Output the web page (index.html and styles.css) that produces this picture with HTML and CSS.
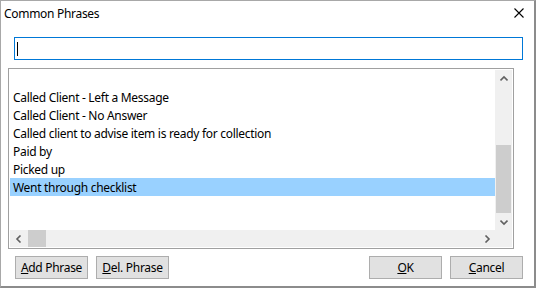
FILE: index.html
```html
<!DOCTYPE html>
<html lang="en">
<head>
    <meta charset="UTF-8">
    <title>Common Phrases</title>
    <link rel="stylesheet" href="styles.css">
</head>
<body>
    <div class="dialog">
        <div class="title-bar">
            <span class="title">Common Phrases</span>
            <svg class="close" width="10" height="10" viewBox="0 0 10 10">
                <path d="M0.5 0.5 L9.5 9.5 M9.5 0.5 L0.5 9.5" stroke="#000" stroke-width="1.1" fill="none"/>
            </svg>
        </div>

        <div class="search-box"><span class="caret"></span></div>

        <div class="phrase-list">
            <div class="list-inner">
                <div class="list-body">
                    <div class="items">
                        <div class="item"></div>
                        <div class="item">Called Client - Left a Message</div>
                        <div class="item">Called Client - No Answer</div>
                        <div class="item">Called client to advise item is ready for collection</div>
                        <div class="item">Paid by</div>
                        <div class="item">Picked up</div>
                        <div class="item selected">Went through checklist</div>
                    </div>
                    <div class="hscroll">
                        <div class="arrow-btn">
                            <svg width="8" height="8" viewBox="0 0 8 8"><polyline points="5.5,0.5 2,4 5.5,7.5" stroke="#606060" stroke-width="1.6" fill="none"/></svg>
                        </div>
                        <div class="h-thumb"></div>
                        <div class="h-track"></div>
                        <div class="arrow-btn">
                            <svg width="8" height="8" viewBox="0 0 8 8"><polyline points="2.5,0.5 6,4 2.5,7.5" stroke="#606060" stroke-width="1.6" fill="none"/></svg>
                        </div>
                    </div>
                </div>
                <div class="vscroll">
                    <div class="arrow-btn">
                        <svg width="8" height="8" viewBox="0 0 8 8"><polyline points="0.5,5.5 4,2 7.5,5.5" stroke="#606060" stroke-width="1.6" fill="none"/></svg>
                    </div>
                    <div class="v-track"></div>
                    <div class="v-thumb"></div>
                    <div class="arrow-btn">
                        <svg width="8" height="8" viewBox="0 0 8 8"><polyline points="0.5,2.5 4,6 7.5,2.5" stroke="#606060" stroke-width="1.6" fill="none"/></svg>
                    </div>
                    <div class="corner"></div>
                </div>
            </div>
        </div>

        <div class="buttons">
            <div class="left-buttons">
                <button><u>A</u>dd Phrase</button>
                <button><u>D</u>el. Phrase</button>
            </div>
            <div class="right-buttons">
                <button><u>O</u>K</button>
                <button><u>C</u>ancel</button>
            </div>
        </div>
    </div>
</body>
</html>
```

FILE: styles.css
```css
body {
    margin: 0;
    font-family: 'Noto Sans', 'Open Sans', sans-serif;
    font-size: 12px;
    letter-spacing: -0.3px;
    color: #000;
    background-color: #fff;
}

.dialog {
    width: 536px;
    height: 288px;
    box-sizing: border-box;
    border: 1px solid #a8a8a8;
    border-right: 2px solid #8c8c8c;
    border-bottom: 2px solid #8c8c8c;
    background-color: #fff;
}

.title-bar {
    height: 29px;
    display: flex;
    justify-content: space-between;
    align-items: flex-start;
    padding-left: 3px;
    padding-right: 10px;
}

.title {
    line-height: 16px;
    margin-top: 5px;
}

.close {
    margin-top: 7px;
}

.search-box {
    margin: 7px 0 0 13px;
    width: 509px;
    height: 23px;
    box-sizing: border-box;
    border: 1px solid #0078d7;
    display: flex;
    align-items: center;
    padding-left: 2px;
}

.caret {
    width: 1px;
    height: 14px;
    background-color: #000;
}

.phrase-list {
    margin: 8px 0 0 7px;
    width: 506px;
    height: 181px;
    box-sizing: border-box;
    border: 1px solid #a0a0a0;
    padding: 1px;
}

.list-inner {
    display: flex;
    height: 100%;
}

.list-body {
    flex: 1;
    display: flex;
    flex-direction: column;
}

.items {
    flex: 1;
    overflow: hidden;
}

.item {
    height: 18px;
    line-height: 19px;
    padding-left: 3px;
    white-space: nowrap;
}

.item.selected {
    background-color: #99d1ff;
}

.hscroll {
    height: 17px;
    display: flex;
    background-color: #f0f0f0;
}

.h-track {
    flex: 1;
}

.h-thumb {
    width: 18px;
    margin-left: 1px;
    background-color: #cdcdcd;
}

.arrow-btn {
    width: 17px;
    height: 17px;
    display: flex;
    align-items: center;
    justify-content: center;
}

.vscroll {
    width: 17px;
    display: flex;
    flex-direction: column;
    background-color: #f0f0f0;
}

.v-track {
    flex: 1;
}

.v-thumb {
    height: 68px;
    margin: 0 1px;
    background-color: #cdcdcd;
}

.corner {
    height: 17px;
}

.buttons {
    display: flex;
    justify-content: space-between;
    margin-top: 7px;
    padding: 0 11px 0 14px;
}

.left-buttons,
.right-buttons {
    display: flex;
    gap: 8px;
}

button {
    width: 73px;
    height: 23px;
    padding: 0;
    font-family: inherit;
    font-size: 12px;
    letter-spacing: -0.3px;
    color: #000;
    background-color: #e1e1e1;
    border: 1px solid #adadad;
    border-radius: 0;
}
```
